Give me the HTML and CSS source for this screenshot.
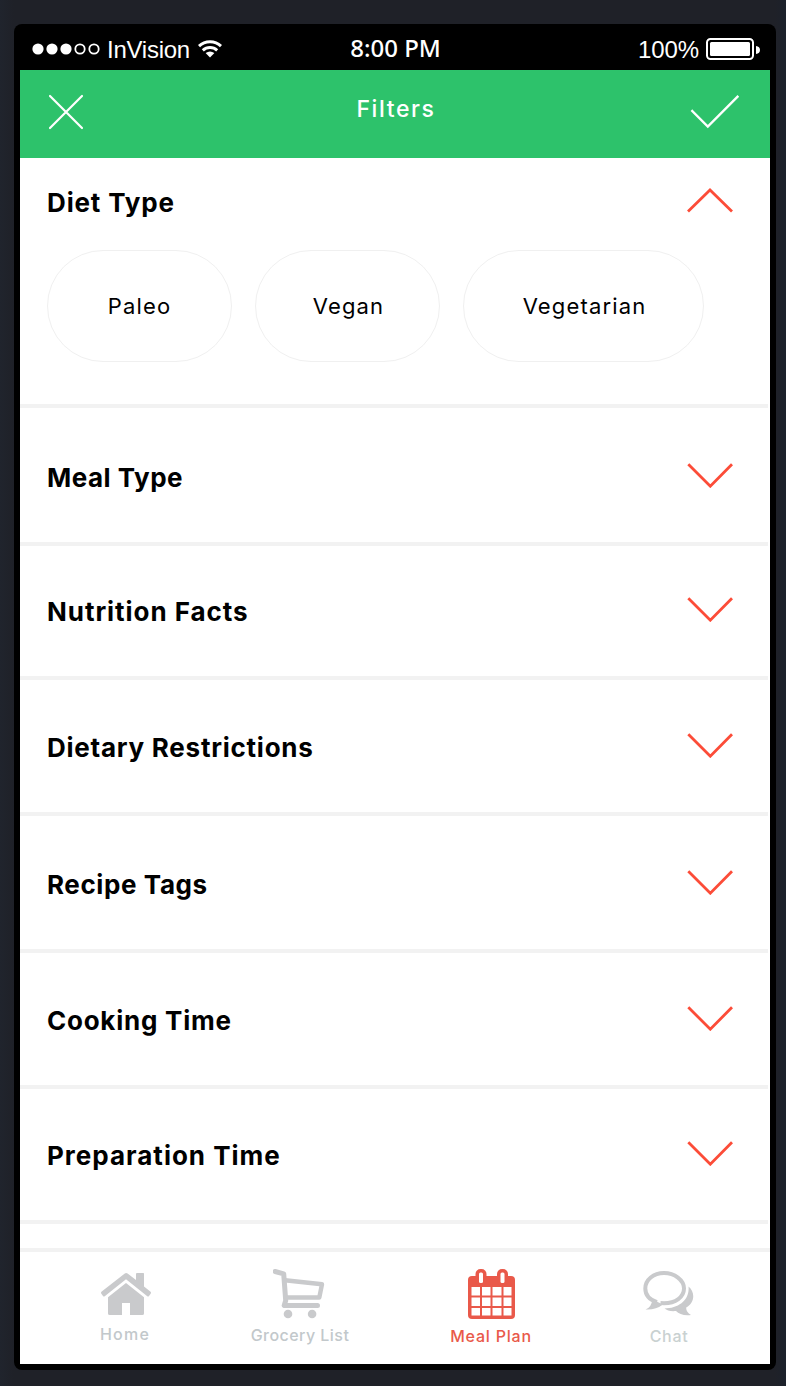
FILE: index.html
```
<!DOCTYPE html>
<html lang="en">
<head>
<meta charset="utf-8">
<title>Filters</title>
<link rel="stylesheet" href="styles.css">
</head>
<body>
<div class="phone">
  <div class="status">
    <div class="status-left">
      <svg class="signal" width="68" height="12" viewBox="0 0 68 12"><g fill="#fff"><circle cx="6" cy="6" r="5.6"/><circle cx="20" cy="6" r="5.6"/><circle cx="34" cy="6" r="5.6"/></g><g fill="none" stroke="#fff" stroke-width="1.8"><circle cx="48" cy="6" r="4.7"/><circle cx="62" cy="6" r="4.7"/></g></svg>
      <span class="carrier">InVision</span>
      <svg class="wifi" width="24" height="18" viewBox="0 0 24 18"><g fill="none" stroke="#fff" stroke-width="3"><path d="M1 6.1C7 .3 17 .3 23 6.1"/><path d="M4.8 10.3C9 6.5 15 6.5 19.2 10.3"/></g><path fill="#fff" d="M7.6 13.1Q12 10.1 16.4 13.1L12 17.6z"/></svg>
    </div>
    <div class="time">8:00 PM</div>
    <div class="status-right">
      <span class="percent">100%</span>
      <svg width="55" height="22" viewBox="0 0 55 22"><rect x="1" y="1" width="46" height="20" rx="3.5" fill="none" stroke="#fff" stroke-width="2"/><rect x="4" y="4" width="40" height="14" rx="1.5" fill="#fff"/><path d="M50 8Q54 8.600 54 12T50 16z" fill="#fff"/></svg>
    </div>
  </div>
  <div class="screen">
    <header class="header">
      <svg class="close" width="36" height="36" viewBox="0 0 36 36"><path d="M2 2L34 34M34 2L2 34" fill="none" stroke="#fff" stroke-width="2.2" stroke-linecap="round"/></svg>
      <h1 class="title">Filters</h1>
      <svg class="check" width="50" height="36" viewBox="0 0 50 36"><path d="M2.300 17L17.800 32.500L47.500 2.700" fill="none" stroke="#fff" stroke-width="2.400" stroke-linecap="square"/></svg>
    </header>
    <main class="filters">
      <section class="filter filter--open">
        <div class="filter-head"><h2 class="label label--diet">Diet Type</h2><svg class="chevron" width="46" height="26" viewBox="0 0 46 26"><path d="M1 24.500L23 3L45 24.500"/></svg></div>
        <div class="chips">
          <div class="chip"><span>Paleo</span></div>
          <div class="chip chip--vegan"><span>Vegan</span></div>
          <div class="chip chip--wide"><span>Vegetarian</span></div>
        </div>
      </section>
      <section class="filter filter--meal"><h2 class="label label--meal">Meal Type</h2><svg class="chevron" width="46" height="26" viewBox="0 0 46 26"><path d="M1.300 2.300L23.300 24.200L45 2.300"/></svg></section>
      <section class="filter filter--nutrition"><h2 class="label label--nutrition">Nutrition Facts</h2><svg class="chevron" width="46" height="26" viewBox="0 0 46 26"><path d="M1.300 2.300L23.300 24.200L45 2.300"/></svg></section>
      <section class="filter"><h2 class="label label--dietary">Dietary Restrictions</h2><svg class="chevron" width="46" height="26" viewBox="0 0 46 26"><path d="M1.300 2.300L23.300 24.200L45 2.300"/></svg></section>
      <section class="filter filter--recipe"><h2 class="label label--recipe">Recipe Tags</h2><svg class="chevron" width="46" height="26" viewBox="0 0 46 26"><path d="M1.300 2.300L23.300 24.200L45 2.300"/></svg></section>
      <section class="filter"><h2 class="label label--cooking">Cooking Time</h2><svg class="chevron" width="46" height="26" viewBox="0 0 46 26"><path d="M1.300 2.300L23.300 24.200L45 2.300"/></svg></section>
      <section class="filter filter--prep"><h2 class="label label--prep">Preparation Time</h2><svg class="chevron" width="46" height="26" viewBox="0 0 46 26"><path d="M1.300 2.300L23.300 24.200L45 2.300"/></svg></section>
    </main>
    <nav class="tabs">
      <a class="tab tab--home">
        <svg width="52" height="48" viewBox="0 -1 52 48" fill="#c9cacc"><path d="M24.800 4.500L1.400 22.700Q.6 23.500 1.200 24.600L3 27Q3.800 27.900 4.700 27.200L26 10.300L47.300 27.200Q48.200 27.900 49 27L50.800 24.600Q51.400 23.500 50.600 22.700L44 17.500V4.600Q44 4 43.300 4H37Q36 4 36 5V11L27.600 4.500Q26 3.500 24.800 4.500z"/><path d="M26 14L44 28.300V44.500Q44 46 42.300 46H30V34H22V46H9.800Q8 46 8 44.500V28.300z"/></svg>
        <span>Home</span>
      </a>
      <a class="tab tab--grocery">
        <svg width="54" height="52" viewBox="1.500 1.500 54 52"><g fill="none" stroke="#c9cacc" stroke-linecap="round" stroke-linejoin="round"><path stroke-width="5" d="M3.600 5L12.200 7.300L14.200 34L12.700 39H46"/><path stroke-width="4.400" d="M13.500 13.700L50.500 17.700L47.800 31H15"/></g><g fill="#c9cacc"><circle cx="16.500" cy="47.500" r="4.300"/><circle cx="40.600" cy="47.500" r="4.300"/></g></svg>
        <span>Grocery List</span>
      </a>
      <a class="tab tab--plan">
        <svg width="48" height="51" viewBox="0 -1 48 51"><rect x="0" y="7" width="47" height="43" rx="4" fill="#e9594a"/><rect x="7.500" y="0" width="11" height="17" rx="5" fill="#e9594a"/><rect x="29" y="0" width="11" height="17" rx="5" fill="#e9594a"/><g fill="#fff"><rect x="11" y="3.500" width="4" height="10.500" rx="1.500"/><rect x="32.500" y="3.500" width="4" height="10.500" rx="1.500"/><path d="M3.500 18h8.500v8.500H3.500zM14 18h8.500v8.500h-8.500zM24.500 18h9v8.500h-9zM35.500 18h8v8.500h-8zM3.500 28.500h8.500v8.500H3.500zM14 28.500h8.500v8.500h-8.500zM24.500 28.500h9v8.500h-9zM35.500 28.500h8v8.500h-8zM3.500 39h8.500v7.500H3.500zM14 39h8.500v7.500h-8.500zM24.500 39h9v7.500h-9zM35.500 39h8v7.500h-8z"/></g></svg>
        <span>Meal Plan</span>
      </a>
      <a class="tab tab--chat">
        <svg width="52" height="48" viewBox="-0.500 -2 52 48"><path d="M14.500 32.100C6 29.400 2.800 24.500 2.800 18.500C2.800 10 11 3 21.500 3S41.500 10 41.500 18.500S33 33.200 21.500 33.200L18 33" fill="none" stroke="#c9cacc" stroke-width="4"/><path fill="#c9cacc" d="M3 39.500Q9 37.500 9.800 29.500L20.500 34.500Q13 40.200 3 39.500z"/><path fill="#c9cacc" d="M46 16.500C52.800 22 52.500 32.500 43.700 37.500C43.500 40.500 45 43 48.500 45C41.500 46 36.500 44 33.500 41C28 41.500 24.500 40.500 22 38.500C36 38.500 47.500 30 46 16.500z"/></svg>
        <span>Chat</span>
      </a>
    </nav>
  </div>
</div>
</body>
</html>
```
FILE: styles.css
```
* { box-sizing: border-box; }
body {
  margin: 0;
  height: 1386px;
  padding: 24px 10px 16px 14px;
  overflow: hidden;
  background: linear-gradient(90deg, #20242d 0, #1f2128 14px, #1f2128 775px, #1c212b 786px);
  font-family: Inter, "Open Sans", sans-serif;
}
.phone {
  height: 1346px;
  padding: 0 6px 6px;
  border-radius: 8px;
  background: #000;
}
svg { display: block; flex: none; }
h1, h2 { margin: 0; }

.status {
  display: grid;
  grid-template-columns: 1fr auto 1fr;
  align-items: center;
  height: 46px;
  padding: 4px 10px 0 11px;
  color: #fff;
  line-height: 28px;
}
.status-left, .status-right { display: flex; align-items: center; }
.status-right { justify-content: flex-end; gap: 7px; margin-right: -1px; }
.signal { margin-left: 1px; }
.carrier, .percent { padding-top: 2px; font-family: "Liberation Sans", sans-serif; font-size: 24px; white-space: nowrap; }
.carrier { margin: 0 8px 0 7px; letter-spacing: -0.25px; }
.percent { letter-spacing: -0.1px; }
.time { padding-bottom: 2px; font: 500 24px/28px "Noto Sans", "Open Sans", sans-serif; }

.screen { display: flex; flex-direction: column; height: 1294px; background: #fff; }
.header {
  display: grid;
  grid-template-columns: 50px 1fr 50px;
  height: 88px;
  padding: 24px 30px 0 28px;
  background: #2dc26b;
  color: #fff;
}
.title { padding-left: 4px; text-align: center; font-size: 23px; font-weight: 500; line-height: 30px; letter-spacing: 1.6px; }

.filters { flex: 1; margin-right: 2px; }
.filter {
  display: flex;
  justify-content: space-between;
  height: 136px;
  padding: 52px 35px 0 27px;
  border-bottom: 4px solid #f2f2f2;
}
.filter--open { display: block; height: 250px; padding-top: 29px; }
.filter--meal { height: 138px; padding-top: 54px; }
.filter--nutrition { height: 134px; padding-top: 50px; }
.filter--recipe { height: 137px; padding-top: 53px; }
.filter--prep { height: 135px; padding-top: 51px; }
.filter-head { display: flex; justify-content: space-between; }
.label { font-size: 26px; font-weight: 700; line-height: 32px; white-space: nowrap; color: #000; }
.label--diet { letter-spacing: 0.85px; }
.label--meal { letter-spacing: 0.5px; }
.label--nutrition { letter-spacing: 0.95px; }
.label--dietary { letter-spacing: 0.75px; }
.label--recipe { letter-spacing: 0.6px; }
.label--cooking { letter-spacing: 0.75px; }
.label--prep { letter-spacing: 1px; }
.chevron { fill: none; stroke: #fc4c38; stroke-width: 2.8; }

.chips { display: flex; gap: 23px; margin-top: 31px; }
.chip {
  display: flex;
  align-items: center;
  justify-content: center;
  width: 185px;
  height: 112px;
  border: 1px solid #f0f0f0;
  border-radius: 56px;
  font-size: 22px;
  line-height: 28px;
  letter-spacing: 1.15px;
}
.chip--vegan { padding-left: 2px; }
.chip--wide { width: 241px; padding-left: 2px; }

.tabs {
  display: flex;
  height: 116px;
  padding-top: 16px;
  border-top: 4px solid #f2f2f2;
}
.tab {
  display: flex;
  flex-direction: column;
  align-items: center;
  height: 78px;
  font-size: 16px;
  font-weight: 500;
  line-height: 20px;
  letter-spacing: 0.5px;
  color: #c2c8cb;
  white-space: nowrap;
}
.tab span { margin-top: auto; }
.tab--home { width: 80px; margin-left: 66px; height: 76px; letter-spacing: 1.2px; }
.tab--home span { padding-right: 2px; }
.tab--grocery { width: 110px; margin-left: 79px; height: 77px; letter-spacing: 0.45px; }
.tab--plan { width: 100px; margin-left: 87px; color: #e9594a; letter-spacing: 0.8px; }
.tab--plan span { padding-right: 2px; }
.tab--chat { width: 80px; margin-left: 86px; color: #c9d1d1; letter-spacing: 0.7px; }
.tab--chat span { padding-left: 2px; }
```
